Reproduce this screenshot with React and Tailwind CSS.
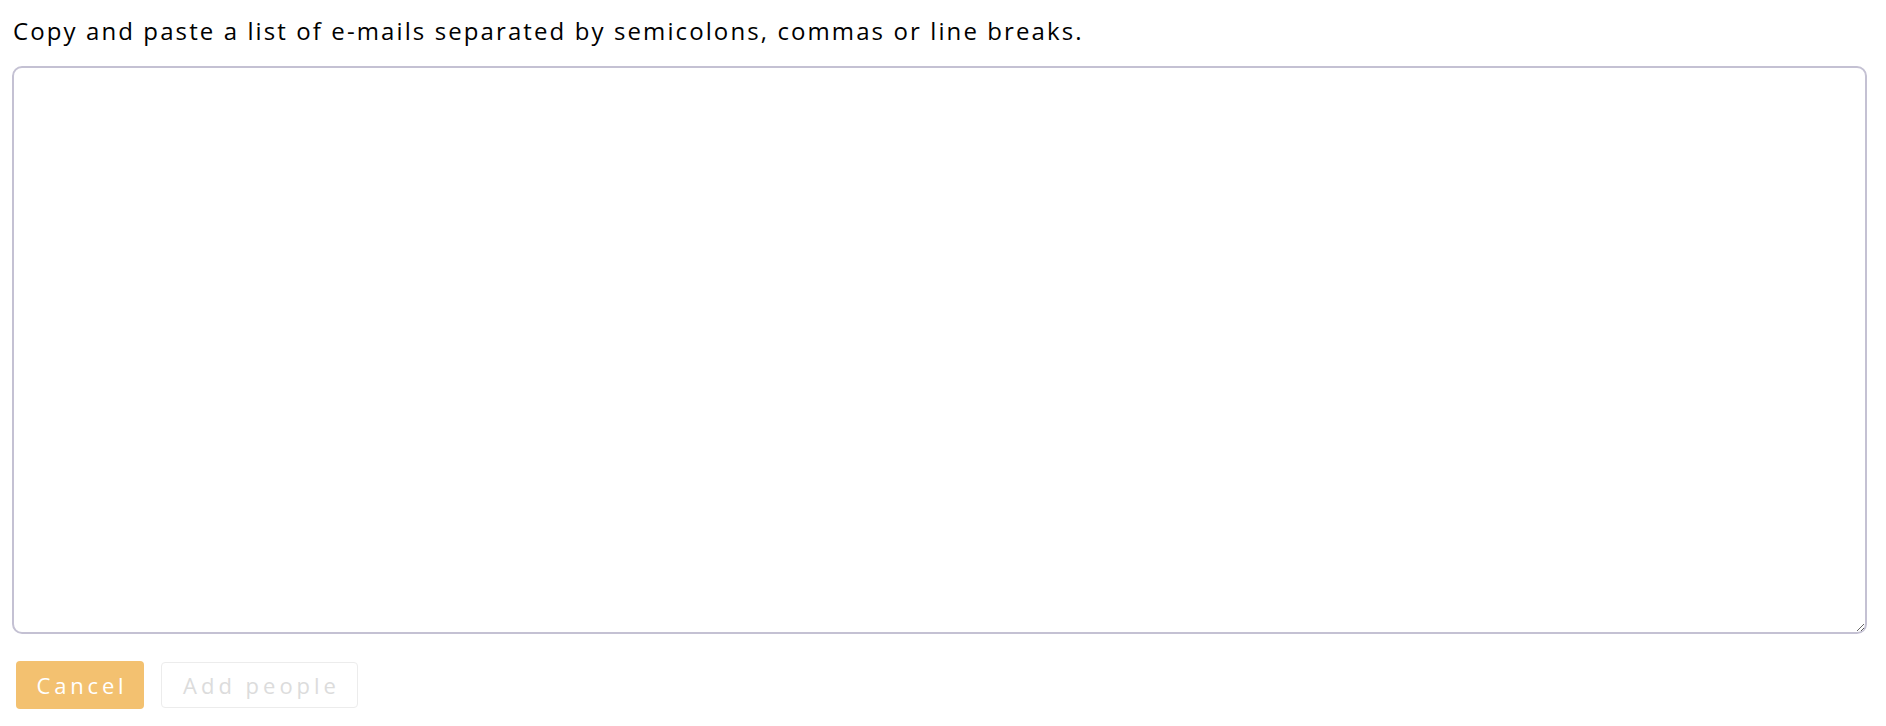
export default function App() {
  return (
    <div className="w-[1886px] h-[726px] bg-white px-3 pt-[12px]" style={{ fontFamily: "'Open Sans', Lato, sans-serif" }}>
      <p className="text-[24px] leading-[38px] text-black tracking-[2.1px] pl-[1px]">
        Copy and paste a list of e-mails separated by semicolons, commas or line breaks.
      </p>
      <textarea className="mt-[16px] block w-[1855px] h-[568px] border-[2.5px] border-[#c4c1d3] rounded-[10px] outline-none resize-y" />
      <div className="mt-[27px] ml-1 flex items-center gap-[17px]">
        <button className="w-[128px] h-[48px] rounded-[4px] bg-[#f3c170] text-white text-[22px] tracking-[3.8px] pl-[4px]">
          Cancel
        </button>
        <button className="w-[197px] h-[46px] rounded-[4px] border border-[#ececec] bg-white text-[#dcdcdc] text-[22px] tracking-[4px] pl-[4px]">
          Add people
        </button>
      </div>
    </div>
  );
}
